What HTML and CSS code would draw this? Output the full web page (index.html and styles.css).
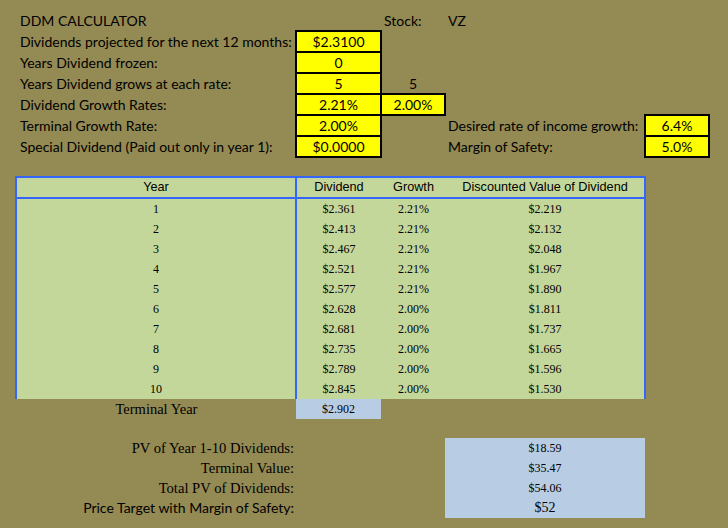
FILE: index.html
```html
<!DOCTYPE html>
<html lang="en">
<head>
<meta charset="utf-8">
<title>DDM Calculator</title>
<link rel="stylesheet" href="styles.css">
</head>
<body>
<main class="sheet">
  <section class="inputs">
    <div class="in-row">
      <span class="label">DDM CALCULATOR</span><span></span><span class="label">Stock:</span><span class="label">VZ</span><span></span>
    </div>
    <div class="in-row">
      <span class="label">Dividends projected for the next 12 months:</span><span class="cell-yellow">$2.3100</span><span></span><span></span><span></span>
    </div>
    <div class="in-row">
      <span class="label">Years Dividend frozen:</span><span class="cell-yellow">0</span><span></span><span></span><span></span>
    </div>
    <div class="in-row">
      <span class="label">Years Dividend grows at each rate:</span><span class="cell-yellow">5</span><span class="center">5</span><span></span><span></span>
    </div>
    <div class="in-row">
      <span class="label">Dividend Growth Rates:</span><span class="cell-yellow">2.21%</span><span class="cell-yellow">2.00%</span><span></span><span></span>
    </div>
    <div class="in-row">
      <span class="label">Terminal Growth Rate:</span><span class="cell-yellow">2.00%</span><span></span><span class="label">Desired rate of income growth:</span><span class="cell-yellow">6.4%</span>
    </div>
    <div class="in-row">
      <span class="label">Special Dividend (Paid out only in year 1):</span><span class="cell-yellow">$0.0000</span><span></span><span class="label">Margin of Safety:</span><span class="cell-yellow">5.0%</span>
    </div>
  </section>

  <section class="ddm">
    <div class="tr thead"><span>Year</span><span>Dividend</span><span>Growth</span><span>Discounted Value of Dividend</span></div>
    <div class="tr"><span>1</span><span>$2.361</span><span>2.21%</span><span>$2.219</span></div>
    <div class="tr"><span>2</span><span>$2.413</span><span>2.21%</span><span>$2.132</span></div>
    <div class="tr"><span>3</span><span>$2.467</span><span>2.21%</span><span>$2.048</span></div>
    <div class="tr"><span>4</span><span>$2.521</span><span>2.21%</span><span>$1.967</span></div>
    <div class="tr"><span>5</span><span>$2.577</span><span>2.21%</span><span>$1.890</span></div>
    <div class="tr"><span>6</span><span>$2.628</span><span>2.00%</span><span>$1.811</span></div>
    <div class="tr"><span>7</span><span>$2.681</span><span>2.00%</span><span>$1.737</span></div>
    <div class="tr"><span>8</span><span>$2.735</span><span>2.00%</span><span>$1.665</span></div>
    <div class="tr"><span>9</span><span>$2.789</span><span>2.00%</span><span>$1.596</span></div>
    <div class="tr"><span>10</span><span>$2.845</span><span>2.00%</span><span>$1.530</span></div>
  </section>

  <div class="terminal">
    <span class="terminal-label">Terminal Year</span><span class="terminal-value">$2.902</span>
  </div>

  <section class="summary">
    <span class="sum-label serif-lg">PV of Year 1-10 Dividends:</span><span></span><span class="sum-value">$18.59</span>
    <span class="sum-label serif-lg">Terminal Value:</span><span></span><span class="sum-value">$35.47</span>
    <span class="sum-label serif-lg">Total PV of Dividends:</span><span></span><span class="sum-value">$54.06</span>
    <span class="sum-label sans-lab">Price Target with Margin of Safety:</span><span></span><span class="sum-value big">$52</span>
  </section>
</main>
</body>
</html>
```

FILE: styles.css
```css
html, body {
  margin: 0;
  padding: 0;
}
body {
  background: #948a54;
  color: #000;
  width: 728px;
  height: 528px;
  overflow: hidden;
}
.sheet {
  padding-top: 10px;
}

/* ---------- input area ---------- */
.inputs {
  font-family: Lato, "Liberation Sans", sans-serif;
  font-size: 14px;
}
.in-row {
  display: grid;
  grid-template-columns: 279px 85px 64px 200px 64px;
  padding-left: 17px;
  height: 21px;
  line-height: 21px;
}
.in-row > span {
  white-space: nowrap;
}
.label {
  padding-left: 3px;
}
.center {
  text-align: center;
}
.cell-yellow {
  background: #ffff00;
  text-align: center;
  outline: 2px solid #000;
  outline-offset: -1px;
}

/* ---------- dividend table ---------- */
.ddm {
  margin: 19px 0 0 15px;
  width: 631px;
  box-sizing: border-box;
  border: 2px solid #3366ff;
  border-bottom: 0;
  background: #c4d79b;
  font-family: "Liberation Serif", "Times New Roman", serif;
  font-size: 12px;
}
.tr {
  display: grid;
  grid-template-columns: 280px 84px 65px 198px;
  height: 20px;
  line-height: 20px;
  text-align: center;
}
.tr > span:first-child {
  border-right: 2px solid #3366ff;
}
.thead {
  height: 21px;
  line-height: 19px;
  box-sizing: border-box;
  border-bottom: 2px solid #3366ff;
  font-family: "Liberation Sans", Arial, sans-serif;
  font-size: 12.7px;
}

/* ---------- terminal row ---------- */
.terminal {
  display: grid;
  grid-template-columns: 279px 85px;
  margin-left: 17px;
  height: 20px;
  line-height: 20px;
  text-align: center;
  font-family: "Liberation Serif", "Times New Roman", serif;
}
.terminal-label {
  font-size: 14.5px;
}
.terminal-value {
  background: #b8cce4;
  font-size: 12px;
}

/* ---------- summary ---------- */
.summary {
  display: grid;
  grid-template-columns: 279px 149px 200px;
  grid-auto-rows: 20px;
  margin: 19px 0 0 17px;
  line-height: 20px;
}
.sum-label {
  text-align: right;
  padding-right: 2px;
  white-space: nowrap;
}
.serif-lg {
  font-family: "Liberation Serif", "Times New Roman", serif;
  font-size: 14.6px;
}
.sans-lab {
  font-family: Lato, "Liberation Sans", sans-serif;
  font-size: 14px;
}
.sum-value {
  background: #b8cce4;
  text-align: center;
  font-family: "Liberation Serif", "Times New Roman", serif;
  font-size: 12px;
}
.sum-value.big {
  font-size: 14px;
}
```
